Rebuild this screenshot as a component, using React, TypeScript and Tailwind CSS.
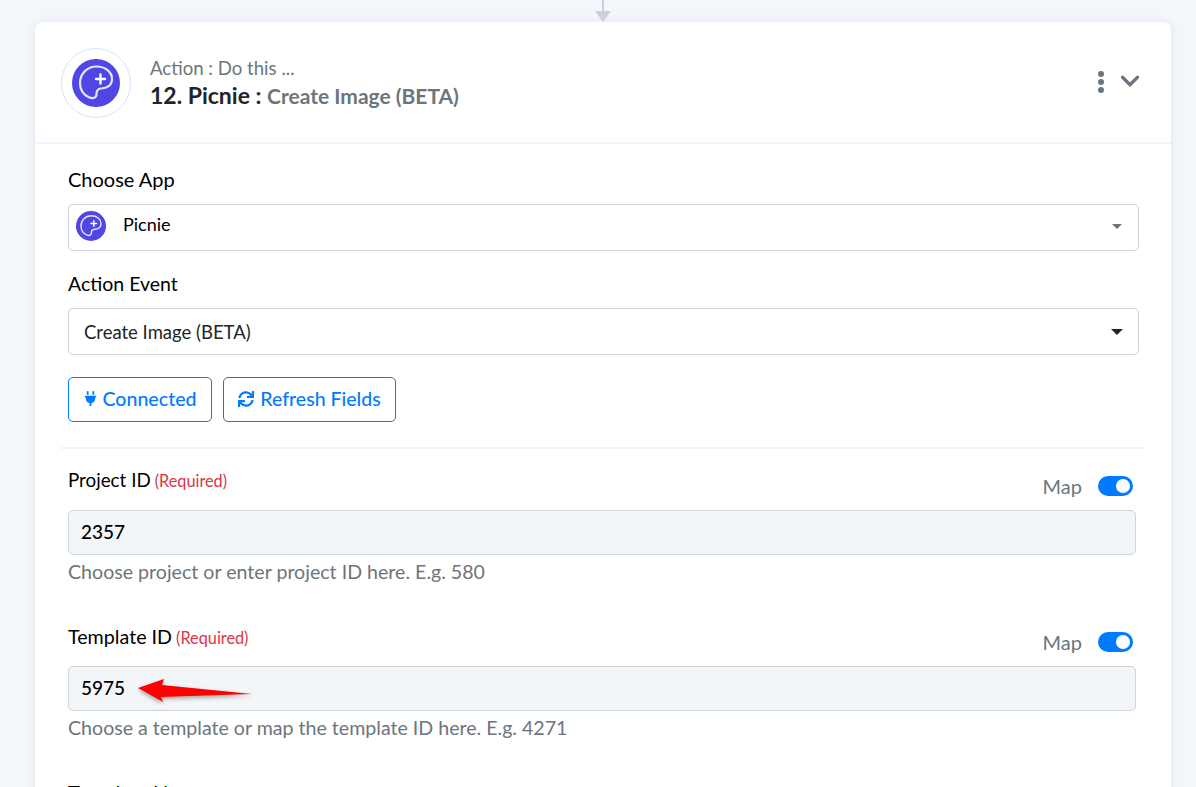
import React from "react";
import { ChevronDown } from "lucide-react";
import { FaPlug, FaSync } from "react-icons/fa";

const PicnieIcon = ({ size }: { size: number }) => (
    <svg width={size} height={size} viewBox="0 0 48 48" className="shrink-0">
        <circle cx="24" cy="24" r="24" fill="#4f46e5" />
        <path
            d="M24.500 7.500C15 7.500 8 15 8 24c0 7 4 12 9 14.300 4 1.700 7.500.7 7.500-3.300 0-3 1.500-5 4-5.500 2-.4 3.500-.2 5.500-1 3.500-1.200 6-4.500 6-8.500 0-7-6.500-12.500-15.500-12.500z"
            fill="none"
            stroke="#e4e7ff"
            strokeWidth="2.200"
        />
        <path d="M28.500 15.500v9M24 20h9" fill="none" stroke="#ffffff" strokeWidth="2.400" strokeLinecap="round" />
    </svg>
);

const Toggle = () => (
    <span className="mt-[3px] flex h-5 w-[35px] items-center justify-end rounded-full bg-[#007bff] px-[3px]">
        <span className="h-[14px] w-[14px] rounded-full bg-white" />
    </span>
);

interface MapFieldProps {
    label: string;
    value: string;
    help: string;
    arrow?: boolean;
}

const MapField: React.FC<MapFieldProps> = ({ label, value, help, arrow }) => (
    <div>
        <div className="flex h-[48px] items-start justify-between pr-[6px]">
            <div className={`flex items-baseline gap-[4px] ${arrow ? "pt-[6px]" : "pt-[5px]"}`}>
                <span className={`${arrow ? "text-[19.700px]" : "text-[18.800px]"} leading-[26px] text-black`}>{label}</span>
                <span className="text-[16.300px] leading-[20px] text-[#dc3545]">(Required)</span>
            </div>
            <div className="flex items-start gap-[16px] pt-[11px]">
                <span className="text-[20px] leading-[26px] text-[#6c757d]">Map</span>
                <Toggle />
            </div>
        </div>
        <div className="relative mr-[3px] flex h-[45px] items-center rounded-[5px] border border-[#ced4da] bg-[#f3f6f9] px-3 text-[19px] font-medium text-black">
            {value}
            {arrow && (
                <svg width="118" height="30" viewBox="0 0 118 30" className="absolute left-[68px] top-[8px]">
                    <defs>
                        <filter id="arrow-shadow" x="-10%" y="-30%" width="120%" height="170%">
                            <feDropShadow dx="0" dy="2" stdDeviation="2" floodColor="#000" floodOpacity="0.35" />
                        </filter>
                    </defs>
                    <path d="M1 13 L27 4 L25 10 L115 19 L24 22 L26 27 Z" fill="#ff0000" filter="url(#arrow-shadow)" />
                </svg>
            )}
        </div>
        <p className="mt-[4px] text-[19.600px] leading-[26px] text-[#6c757d]">{help}</p>
    </div>
);

export default function App() {
    return (
        <div className="relative h-[787px] overflow-hidden bg-[#f3f6fa] pl-[35px] pr-[25px] pt-[22px] font-['Lato',sans-serif]">
            <div className="absolute left-[595px] top-0 flex flex-col items-center">
                <span className="h-[11px] w-[2px] bg-[#ccd2da]" />
                <span className="h-0 w-0 border-x-[8px] border-t-[11px] border-x-transparent border-t-[#ccd2da]" />
            </div>

            <div className="rounded-[8px] bg-white pb-[40px] shadow-[0_0_8px_rgba(30,60,100,0.08)]">
                <div className="flex h-[122px] items-center border-b-2 border-[#eef5fe] pl-[26px] pr-[26px]">
                    <div className="mt-[2px] flex h-[70px] w-[70px] items-center justify-center rounded-full border border-[#d5e3fb]">
                        <PicnieIcon size={48} />
                    </div>
                    <div className="ml-[19px] flex-1 pt-[2px]">
                        <div className="-mt-[1px] mb-[1px] text-[18.600px] leading-[24px] text-[#6c757d]">Action : Do this ...</div>
                        <div className="text-[23px] leading-[29px] font-bold text-[#212529]">
                            12. Picnie : <span className="text-[21px] font-bold text-[#6c757d]">Create Image (BETA)</span>
                        </div>
                    </div>
                    <div className="flex items-center gap-[11px]">
                        <div className="flex flex-col gap-[2px]">
                            <span className="h-[6px] w-[6px] rounded-full bg-[#6c757d]" />
                            <span className="h-[6px] w-[6px] rounded-full bg-[#6c757d]" />
                            <span className="h-[6px] w-[6px] rounded-full bg-[#6c757d]" />
                        </div>
                        <ChevronDown size={30} strokeWidth={2.600} className="-mt-[2px] text-[#6c757d]" />
                    </div>
                </div>

                <div className="pl-[33px] pr-[32px]">
                    <div className="pt-[22px] text-[20px] leading-[26px] text-black">Choose App</div>
                    <div className="mt-[12px] flex h-[47px] items-center rounded-[5px] border border-[#ced4da] pb-[3px] pl-[7px] pr-[16px]">
                        <PicnieIcon size={30} />
                        <span className="mb-[4px] ml-[17px] flex-1 text-[18px] text-black">Picnie</span>
                        <span className="h-0 w-0 border-x-[5px] border-t-[5px] border-x-transparent border-t-[#6c757d]" />
                    </div>

                    <div className="mt-[20px] text-[19.500px] leading-[26px] text-black">Action Event</div>
                    <div className="mt-[11px] flex h-[47px] items-center rounded-[5px] border border-[#ced4da] pl-[15px] pr-[15px]">
                        <span className="flex-1 pt-[2px] text-[18.500px] text-[#212529]">Create Image (BETA)</span>
                        <span className="h-0 w-0 border-x-[6px] border-t-[6px] border-x-transparent border-t-[#212529]" />
                    </div>

                    <div className="mt-[22px] flex gap-[11px]">
                        <button className="flex h-[45px] w-[144px] items-center justify-center gap-[4px] rounded-[5px] border border-[#007bff] pb-[2px] text-[19.600px] font-medium text-[#007bff]">
                            <FaPlug size={15} />
                            Connected
                        </button>
                        <button className="flex h-[45px] w-[173px] items-center justify-center gap-[6px] rounded-[5px] border border-[#007bff] pb-[2px] text-[19.500px] font-medium text-[#007bff]">
                            <FaSync size={16} />
                            Refresh Fields
                        </button>
                    </div>
                </div>

                <div className="ml-[25px] mr-[27px] mt-[25px] h-[2px] bg-[#eef5fe]" />

                <div className="pl-[33px] pr-[32px] pt-[13px]">
                    <MapField label="Project ID" value="2357" help="Choose project or enter project ID here. E.g. 580" />
                    <div className="mt-[33px]">
                        <MapField label="Template ID" value="5975" help="Choose a template or map the template ID here. E.g. 4271" arrow />
                    </div>
                    <div className="mt-[38px] text-[20px] leading-[26px] text-black">Template Name</div>
                </div>
            </div>
        </div>
    );
}
